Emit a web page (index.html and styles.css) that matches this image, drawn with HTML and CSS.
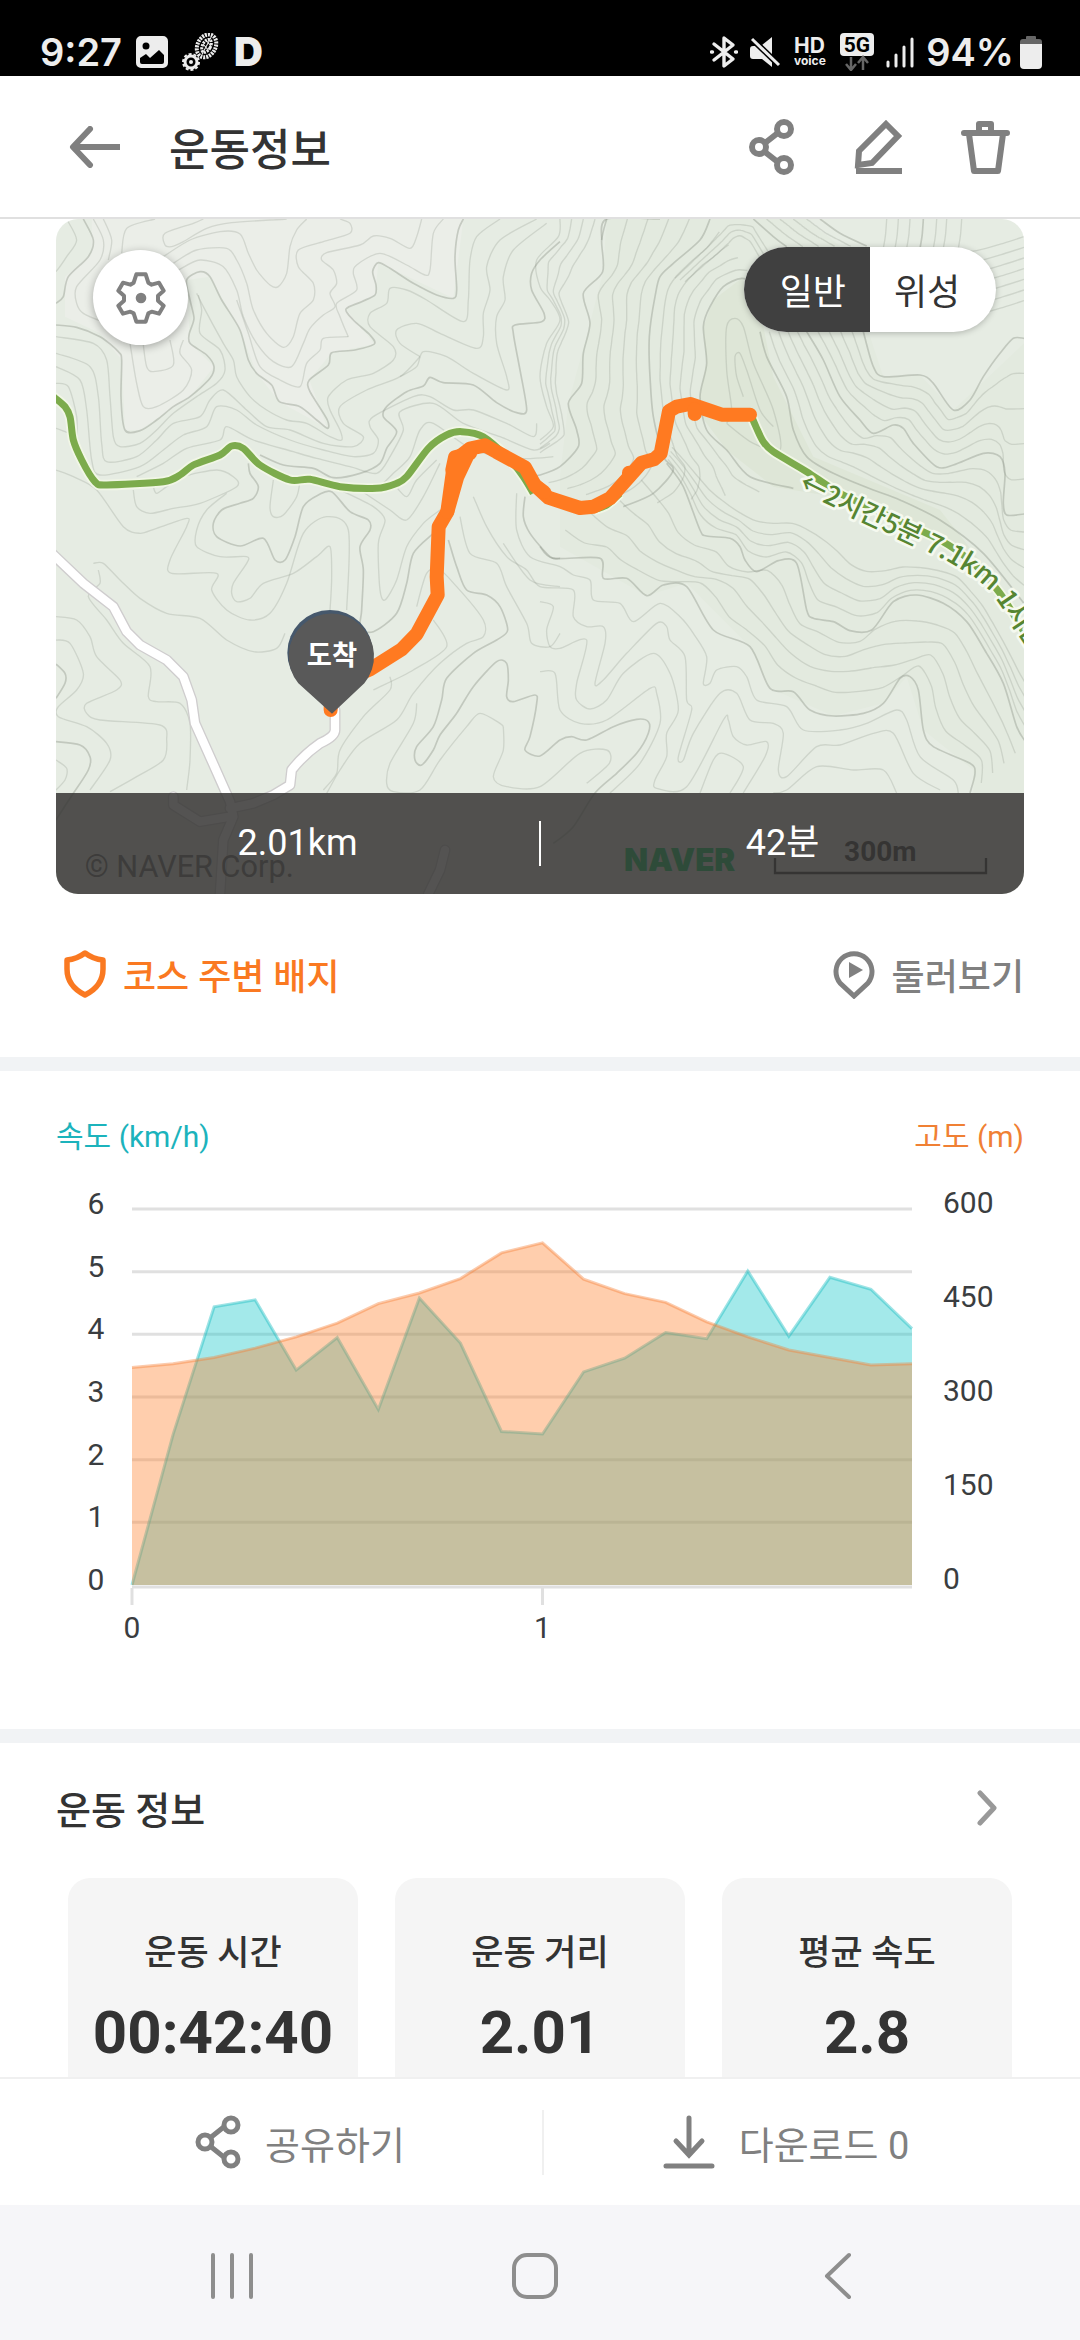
FILE: index.html
```html
<!DOCTYPE html>
<html lang="ko">
<head>
    <meta charset="UTF-8">
    <meta name="viewport" content="width=device-width, initial-scale=1.0">
    <title>운동정보</title>
    <link rel="stylesheet" href="styles.css">
</head>
<body>
    <!-- status bar -->
    <div class="status-bar">
        <div class="status-left">
            <span class="clock">9:27</span>
            <svg class="status-image" width="32" height="32" viewBox="0 0 32 32"><path fill="#ededed" fill-rule="evenodd" d="M5 0h22a5 5 0 0 1 5 5v22a5 5 0 0 1-5 5H5a5 5 0 0 1-5-5V5a5 5 0 0 1 5-5zM10 6.500a3.500 3.500 0 1 0 0 7a3.500 3.500 0 0 0 0-7zM4 22v4q0 2 2 2h20q2 0 2-2v-7l-5-5-9 8-4-4z"/></svg>
            <svg width="38" height="38" viewBox="0 0 38 38">
                <g transform="rotate(28 25 12)" fill="none" stroke="#ededed">
                    <ellipse cx="25" cy="13" rx="9" ry="12" stroke-width="4" stroke-dasharray="2 1"/>
                    <ellipse cx="25" cy="13" rx="4" ry="7" stroke-width="3" stroke-dasharray="2 1"/>
                    <path d="M25 3v20M21 8l8 3M21 13l8 3" stroke-width="1"/>
                </g>
                <circle cx="9" cy="29" r="6" fill="none" stroke="#ededed" stroke-width="3"/>
                <circle cx="9" cy="29" r="8" fill="none" stroke="#ededed" stroke-width="2" stroke-dasharray="3 2"/>
                <circle cx="9" cy="29" r="2" fill="#ededed"/>
            </svg>
            <span class="app-d">D</span>
        </div>
        <div class="status-right">
            <svg width="28" height="34" viewBox="0 0 28 34" fill="none" stroke="#ededed" stroke-width="3.400" stroke-linejoin="round" stroke-linecap="round"><path d="M4 9l19 15-9 7V3l9 7L4 25"/><path d="M1.500 17h1M25.500 17h1"/></svg>
            <svg width="32" height="32" viewBox="0 0 32 32"><path fill="#ededed" d="M22 1v18L12 9zM3 10h5l14 14v7L12 23H3q-3 0-3-3v-7q0-3 3-3z"/><path d="M3 4l26 25" stroke="#000" stroke-width="6"/><path d="M2 3l27 26" stroke="#ededed" stroke-width="3"/></svg>
            <svg width="34" height="42" viewBox="0 -6 34 42" fill="#ededed" font-family="Inter, sans-serif" font-weight="700"><text x="0" y="16" font-size="21">HD</text><text x="0" y="28" font-size="12">voice</text></svg>
            <svg width="34" height="38" viewBox="0 0 34 38"><rect width="34" height="23" rx="4" fill="#ededed"/><text x="17" y="19" font-family="Roboto, sans-serif" font-size="21" font-weight="700" text-anchor="middle">5G</text><path d="M11 24v12M6 31l5 6 5-6M23 37V25M18 30l5-6 5 6" fill="none" stroke="#666" stroke-width="2.500"/></svg>
            <svg width="28" height="32" viewBox="0 0 28 32" stroke="#ededed" stroke-width="3" stroke-linecap="round"><path d="M2 26v4M10 19v11M18 11v19M26 3v27"/></svg>
            <span class="battery-text">94%</span>
            <svg width="22" height="33" viewBox="0 0 22 33"><path fill="#666" d="M6 1q0-1 1-1h8q1 0 1 1v2h3q3 0 3 3v4H0V6q0-3 3-3h3z"/><path fill="#ededed" d="M0 8h22v21q0 4-4 4H4q-4 0-4-4z"/></svg>
        </div>
    </div>

    <header class="app-header">
        <button class="icon-btn" aria-label="뒤로"><svg width="52" height="42" viewBox="0 0 52 42" class="line-icon"><path d="M51 21H5" /><path d="M21 3L4 21l17 18" stroke-linecap="round" stroke-linejoin="round"/></svg></button>
        <h1>운동정보</h1>
        <div class="header-actions">
            <button class="icon-btn" aria-label="공유"><svg width="56" height="56" viewBox="0 0 56 56" class="line-icon"><path d="M21 24l14-11M21 33l14 11"/><circle cx="40" cy="10" r="7"/><circle cx="15" cy="28" r="7"/><circle cx="40" cy="46" r="7"/></svg></button>
            <button class="icon-btn" aria-label="수정"><svg width="56" height="56" viewBox="0 0 56 56" class="line-icon"><path d="M35 5l12 12-26 27-14 2 1-14z"/><path d="M5 52h46"/></svg></button>
            <button class="icon-btn" aria-label="삭제"><svg width="56" height="56" viewBox="0 0 56 56" class="line-icon" stroke-linejoin="round" stroke-linecap="round"><path d="M6 14h43M21 13V5h12v8M11 15l5 37h24l5-37"/></svg></button>
        </div>
    </header>

    <main>
        <section class="course">
            <div class="map">
                <svg class="map-canvas" viewBox="48 27 2904 2025" role="img" aria-label="지도">
                    <rect x="48" y="27" width="2904" height="2025" fill="#e6ece3"/>
                    <path fill="#ebeee8" d="M155 27V130L75 200V320L180 370 245 450 255 660H300L450 560 522 470 450 400 440 210 510 200 600 360 650 490 718 575 862 655 808 510 875 428 1003 402 918 297 1005 255 1015 158 1240 265 1270 27z"/>
                    <path fill="#e3eadf" d="M1700 27L1690 185 1650 340 1585 580 1560 800V1010L1820 1157 1940 1120 2130 1310 2190 1435 2380 1518 2530 1480 2600 1400 2650 1560 2800 1680V1750H2952V400L2740 600 2640 495 2530 500 2400 108 2300 27z"/>
                    <path fill="#dee6d7" d="M2105 205L2020 270 1990 350 2000 460 1970 600 2060 720 2200 830 2500 880 2700 1010 2850 1090 2700 900 2320 740 2200 500 2160 300z"/>
                    <g id="contours" class="contours"></g>
                    <defs>
                        <g id="road-lines">
                            <path d="M30 1025L130 1120 220 1190 260 1265 300 1305 380 1350 430 1400 455 1470 465 1540 510 1640 570 1775 580 1820 550 1890 540 2052"/>
                            <path d="M885 1500V1560Q885 1580 840 1600 790 1635 755 1680L750 1725 700 1755 640 1780 570 1795"/>
                            <path d="M400 1760V1785L480 1835 570 1820M1215 1920L1200 1980 1165 2052"/>
                        </g>
                    </defs>
                    <use href="#road-lines" class="road-edge"/>
                    <use href="#road-lines" class="road"/>
                    <g id="trails"></g>
                    <path id="label-line" fill="none" d="M2272 838L2360 882 2450 925 2610 1000 2730 1058 2800 1100Q2850 1135 2890 1200L2990 1350"/>
                    <text class="trail-label"><textPath href="#label-line">←2시간5분 7.1km 1시간</textPath></text>
                    <g class="route">
                        <path d="M872 1500V1490M940 1400L990 1378 1085 1318 1130 1272 1193 1155 1190 1100 1196 950 1222 905 1238 790 1256 742 1290 716 1335 706 1370 726 1455 772 1485 826 1525 863 1620 894 1660 890 1710 865 1765 803 1805 758 1842 748 1862 730 1887 603 1910 590 1950 582 2045 614H2130"/>
                        <path d="M1222 905L1252 800 1290 720M1237 780L1245 742 1290 730M1485 826L1512 846M1767 788V800M1964 598V612"/>
                    </g>
                    <circle cx="870" cy="1328" r="128" fill="#46586c"/>
                    <path fill="#595959" d="M775 1420A128 128 0 1 1 973 1420L876 1511z"/>
                    <text class="pin-label" x="876" y="1364">도착</text>
                    <text class="copyright" x="134" y="2001">© NAVER Corp.</text>
                    <text class="naver" x="1752" y="1983">NAVER</text>
                    <text class="scale" x="2521" y="1954">300m</text>
                    <path d="M2205 1944v45h633v-45" fill="none" stroke="#333" stroke-width="7"/>
                </svg>
                <button class="settings-btn" aria-label="지도 설정"><svg width="50" height="52" viewBox="227 184 150 156"><path fill="none" stroke="#808080" stroke-width="12" stroke-linejoin="round" d="M288 191H316L324 216 334 222 356 216 370 240 353 255V270L370 285 356 309 334 303 324 308 316 333H288L280 308 270 303 248 309 234 285 251 270V255L234 240 248 216 270 222 280 216z"/><circle cx="302" cy="262" r="16" fill="#808080"/></svg></button>
                <div class="map-type">
                    <button class="active">일반</button>
                    <button>위성</button>
                </div>
                <div class="map-summary">
                    <span>2.01km</span>
                    <span>42분</span>
                </div>
            </div>
            <div class="course-links">
                <a href="#" class="badge-link">
                    <svg width="44" height="50" viewBox="0 0 44 50"><path fill="none" stroke="#fa7921" stroke-width="5.500" stroke-linejoin="round" d="M22 4Q30 10 40 11V20Q40 37 22 46 4 37 4 20V11Q14 10 22 4z"/></svg>
                    코스 주변 배지
                </a>
                <a href="#" class="tour-link">
                    <svg width="44" height="50" viewBox="0 0 44 50"><path fill="none" stroke="#808080" stroke-width="5" d="M8 34A18 18 0 1 1 36 34L22 47z"/><path fill="#808080" d="M17 13l14 8-14 8z"/></svg>
                    둘러보기
                </a>
            </div>
        </section>

        <section class="chart-section">
            <div class="chart-legend">
                <span class="speed">속도 (km/h)</span>
                <span class="altitude">고도 (m)</span>
            </div>
            <svg id="chart" class="chart" viewBox="0 0 968 480" role="img" aria-label="속도와 고도"></svg>
        </section>

        <section class="info">
            <a href="#" class="info-head">
                <h2>운동 정보</h2>
                <svg width="22" height="36" viewBox="0 0 22 36"><path d="M4 3l14 15L4 33" fill="none" stroke="#999" stroke-width="5" stroke-linecap="round" stroke-linejoin="round"/></svg>
            </a>
            <div class="cards">
                <div class="card"><span>운동 시간</span><strong>00:42:40</strong></div>
                <div class="card"><span>운동 거리</span><strong>2.01</strong></div>
                <div class="card"><span>평균 속도</span><strong>2.8</strong></div>
            </div>
        </section>
    </main>

    <footer class="actions">
        <button>
            <svg width="46" height="54" viewBox="0 0 46 54" class="line-icon thin"><path d="M15 23l15-12M15 31l15 12"/><circle cx="36" cy="10" r="7"/><circle cx="10" cy="27" r="7"/><circle cx="36" cy="44" r="7"/></svg>
            공유하기
        </button>
        <button>
            <svg width="52" height="54" viewBox="0 0 52 54" class="line-icon thin" stroke-linecap="round"><path d="M26 3v36M13 26l13 14 13-14M3 51h46"/></svg>
            다운로드 0
        </button>
    </footer>

    <nav class="system-nav">
        <button aria-label="최근 앱"><svg width="42" height="46" viewBox="0 0 42 46"><path d="M2 2v42M21 2v42M40 2v42"/></svg></button>
        <button aria-label="홈"><svg width="46" height="46" viewBox="0 0 46 46"><rect x="2" y="2" width="42" height="42" rx="13"/></svg></button>
        <button aria-label="뒤로 가기"><svg width="28" height="48" viewBox="0 0 28 48"><path d="M25 3L3 24l22 21"/></svg></button>
    </nav>
    <script src="script.js"></script>
</body>
</html>
```
FILE: styles.css
```css
* {
    box-sizing: border-box;
}
body {
    margin: 0;
    height: 100vh;
    display: flex;
    flex-direction: column;
    background: #fff;
    color: #333;
    font-family: Roboto, "Noto Sans CJK KR", sans-serif;
}
button {
    border: none;
    background: none;
    padding: 0;
    font: inherit;
    color: inherit;
    cursor: pointer;
}
a {
    color: inherit;
    text-decoration: none;
}
svg {
    display: block;
}
h1, h2 {
    margin: 0;
    font-weight: 500;
}

/* status bar */
.status-bar {
    flex: none;
    height: 76px;
    padding: 28px 38px 0 40px;
    display: flex;
    align-items: center;
    justify-content: space-between;
    background: #000;
    color: #ededed;
    font-family: Inter, sans-serif;
    font-size: 38px;
    font-weight: 600;
    line-height: 48px;
}
.status-left, .status-right {
    display: flex;
    align-items: center;
    gap: 14px;
}
.status-right {
    gap: 12px;
}
.app-d {
    font-size: 40px;
    font-weight: 900;
}
.battery-text {
    margin-right: -6px;
}

/* header */
.app-header {
    flex: none;
    height: 143px;
    padding: 0 66px 0 69px;
    display: flex;
    align-items: center;
    border-bottom: 2px solid #e0e0e0;
}
.app-header h1 {
    margin-left: 48px;
    font-family: "Noto Sans CJK KR", sans-serif;
    font-size: 44px;
    line-height: 64px;
}
.header-actions {
    margin-left: auto;
    display: flex;
    gap: 51px;
}
.line-icon {
    fill: none;
    stroke: #808080;
    stroke-width: 6px;
}
.line-icon.thin {
    stroke-width: 5px;
}

main {
    flex: 1;
    min-height: 0;
    overflow: hidden;
}

/* map */
.course {
    padding: 0 56px;
    border-bottom: 14px solid #f1f3f5;
}
.map {
    position: relative;
    overflow: hidden;
    border-radius: 22px;
}
.map-canvas {
    width: 100%;
}
.contours path {
    fill: none;
    stroke: #8d9388;
    stroke-opacity: 0.26;
    stroke-width: 4px;
}
.contours .major {
    stroke-opacity: 0.4;
    stroke-width: 5px;
}
.road, .road-edge {
    fill: none;
    stroke: #fff;
    stroke-width: 25px;
    stroke-linecap: round;
    stroke-linejoin: round;
}
.road-edge {
    stroke: #cfcdce;
    stroke-width: 33px;
}
.trail, .trail-edge {
    fill: none;
    stroke: #7cab4c;
    stroke-width: 21px;
}
.trail-edge {
    stroke: #f1f6e6;
    stroke-width: 32px;
}
.trail-label {
    fill: #568532;
    stroke: #f5f9ef;
    stroke-width: 16px;
    stroke-linejoin: round;
    paint-order: stroke;
    font-family: "Noto Sans CJK KR", sans-serif;
    font-size: 81px;
    font-weight: 500;
}
.route {
    fill: none;
    stroke: #ff7a21;
    stroke-width: 42px;
    stroke-linecap: round;
    stroke-linejoin: round;
}
.pin-label {
    fill: #fff;
    font-size: 82px;
    font-weight: 700;
    text-anchor: middle;
}
.copyright {
    fill: #666;
    font-family: Roboto, sans-serif;
    font-size: 92px;
}
.naver {
    fill: #03c75a;
    font-family: Inter, sans-serif;
    font-size: 94px;
    font-weight: 900;
}
.scale {
    fill: #333;
    font-family: Roboto, sans-serif;
    font-size: 84px;
    font-weight: 700;
    text-anchor: middle;
}
.settings-btn {
    position: absolute;
    top: 31px;
    left: 37px;
    width: 95px;
    height: 95px;
    display: grid;
    place-items: center;
    border-radius: 50%;
    background: #fff;
    box-shadow: 0 2px 8px rgba(0, 0, 0, 0.3);
}
.map-type {
    position: absolute;
    top: 28px;
    right: 28px;
    display: flex;
    border-radius: 43px;
    overflow: hidden;
    background: #fff;
    box-shadow: 0 1px 6px rgba(0, 0, 0, 0.25);
    font-family: "Noto Sans CJK KR", sans-serif;
    font-size: 36px;
    line-height: 85px;
}
.map-type button {
    width: 126px;
    padding: 0 22px 0 24px;
    text-align: left;
}
.map-type .active {
    padding: 0 24px 0 22px;
    text-align: right;
    background: #404040;
    color: #fff;
}
.map-summary {
    position: absolute;
    left: 0;
    right: 0;
    bottom: 0;
    height: 101px;
    display: flex;
    align-items: center;
    background: rgba(54, 53, 52, 0.85);
    color: #fff;
    font-size: 36px;
    line-height: 45px;
}
.map-summary span {
    flex: 1;
    text-align: center;
}
.map-summary span + span {
    border-left: 2px solid #fff;
}
.course-links {
    height: 163px;
    padding-bottom: 4px;
    display: flex;
    align-items: center;
    justify-content: space-between;
    font-size: 36px;
    font-weight: 500;
}
.course-links a {
    display: flex;
    align-items: center;
    gap: 16px;
}
.badge-link {
    padding-left: 7px;
    color: #fa7921;
}
.tour-link {
    color: #808080;
}

/* chart */
.chart-section {
    padding: 44px 56px 74px;
    border-bottom: 14px solid #f1f3f5;
}
.chart-legend {
    display: flex;
    justify-content: space-between;
    font-size: 30px;
    line-height: 44px;
}
.speed {
    color: #1cb3bc;
}
.altitude {
    color: #f08034;
}
.chart {
    width: 100%;
    margin-top: 16px;
}
.chart text {
    fill: #3a3d40;
    font-family: Roboto, sans-serif;
    font-size: 30px;
}
.grid-line {
    stroke: #e0e0e0;
    stroke-width: 3px;
}
.area-speed {
    fill: rgba(13, 197, 200, 0.38);
}
.area-altitude {
    fill: rgba(255, 125, 40, 0.38);
}
.line-speed, .line-altitude {
    fill: none;
    stroke: rgba(13, 185, 190, 0.4);
    stroke-width: 3px;
}
.line-altitude {
    stroke: rgba(245, 125, 50, 0.4);
}

/* workout info */
.info-head {
    display: flex;
    align-items: center;
    justify-content: space-between;
    height: 135px;
    padding: 0 82px 6px 56px;
}
.info-head h2 {
    font-size: 38px;
}
.cards {
    display: grid;
    grid-template-columns: repeat(3, 1fr);
    gap: 37px;
    padding: 0 68px;
}
.card {
    height: 260px;
    padding-top: 50px;
    border-radius: 22px;
    background: #f5f5f5;
    text-align: center;
}
.card span {
    display: block;
    font-size: 35px;
    font-weight: 500;
    line-height: 52px;
}
.card strong {
    display: block;
    margin-top: 18px;
    font-size: 60px;
    line-height: 70px;
}

/* bottom actions */
.actions {
    flex: none;
    height: 128px;
    padding: 0 52px 0 58px;
    display: flex;
    align-items: center;
    border-top: 2px solid #f0f0f0;
    color: #808080;
    font-size: 38px;
}
.actions button {
    flex: 1;
    height: 65px;
    display: flex;
    align-items: center;
    justify-content: center;
    gap: 24px;
}
.actions button + button {
    border-left: 2px solid #f0f0f0;
}

.system-nav {
    flex: none;
    height: 135px;
    padding: 6px 91px 0 81px;
    display: grid;
    grid-template-columns: repeat(3, 1fr);
    background: #f6f6f9;
}
.system-nav button {
    display: grid;
    place-items: center;
}
.system-nav svg {
    fill: none;
    stroke: #8e8e8e;
    stroke-width: 4px;
    stroke-linecap: round;
    stroke-linejoin: round;
}
```
FILE: script.js
```js
const SVG = "http://www.w3.org/2000/svg";

function add(parent, tag, attrs, text) {
    const el = document.createElementNS(SVG, tag);
    for (const key in attrs) el.setAttribute(key, attrs[key]);
    if (text !== undefined) el.textContent = text;
    parent.appendChild(el);
    return el;
}

function parse(str, dx = 0, dy = 0) {
    return str.trim().split(/\s+/).map((p) => {
        const [x, y] = p.split(",").map(Number);
        return [x + dx, y + dy];
    });
}

// smooth curve through all points
function smooth(pts) {
    let d = "M" + pts[0];
    for (let i = 0; i < pts.length - 1; i++) {
        const a = pts[i - 1] || pts[i];
        const b = pts[i];
        const c = pts[i + 1];
        const e = pts[i + 2] || c;
        const k = 7;
        d += "C" + [b[0] + (c[0] - a[0]) / k, b[1] + (c[1] - a[1]) / k,
            c[0] - (e[0] - b[0]) / k, c[1] - (e[1] - b[1]) / k, c[0], c[1]].map(Math.round);
    }
    return d;
}

// n points evenly spaced on the line
function resample(pts, n) {
    const len = [0];
    for (let i = 1; i < pts.length; i++) {
        len.push(len[i - 1] + Math.hypot(pts[i][0] - pts[i - 1][0], pts[i][1] - pts[i - 1][1]));
    }
    const out = [];
    let j = 1;
    for (let i = 0; i < n; i++) {
        const t = len[len.length - 1] * i / (n - 1);
        while (j < pts.length - 1 && len[j] < t) j++;
        const f = (t - len[j - 1]) / (len[j] - len[j - 1]);
        out.push([0, 1].map((k) => pts[j - 1][k] + (pts[j][k] - pts[j - 1][k]) * f));
    }
    return out;
}

const contours = document.getElementById("contours");

function draw(pts, major) {
    add(contours, "path", { d: smooth(pts), class: major ? "major" : "minor" });
}

// minor lines between two neighbours
function between(a, b, count) {
    const p = resample(a, 26);
    const q = resample(b, 26);
    for (let i = 1; i <= count; i++) {
        const f = i / (count + 1);
        draw(p.map((v, n) => [v[0] + (q[n][0] - v[0]) * f, v[1] + (q[n][1] - v[1]) * f]));
    }
}

const majorLines = [
    "130,27 160,90 145,140 85,200 70,260 48,280",
    "48,345 110,352 180,380 235,425 245,450 243,560 255,660 300,662 350,630 400,590 450,560 510,505 522,470 500,435 450,400 448,370 462,325 450,270 440,210 480,185 510,200 545,270 600,360 625,450 650,490 695,525 718,575 780,590 830,630 862,655 862,630 810,545 808,510 865,465 875,428 945,420 1003,402 990,375 940,330 918,297 965,275 1005,255 1008,225 998,185 1015,158 1050,175 1120,220 1190,255 1240,265 1250,240 1245,140 1255,60 1270,27",
    "1560,95 1500,150 1475,190 1475,240 1512,310 1505,335 1425,345 1420,370 1440,480 1460,600 1430,608 1370,578 1300,525 1210,518 1170,502 1150,528 1100,545 1040,590 1030,620 1070,665 1040,715 1020,760 960,790 880,803 820,775 730,765 660,735",
    "625,760 630,790 655,830 640,865 600,880 545,900 520,940 530,980 600,1008 670,985 705,1050 735,1050 765,980 790,890 835,855 875,845 930,905 985,930 990,960 960,1010 970,1080 965,1200 960,1255 1000,1265 1070,1210 1100,1120 1120,1030 1180,970",
    "1225,990 1250,1070 1280,1140 1340,1155 1380,1190 1403,1260 1370,1290 1300,1330 1220,1405 1205,1470 1180,1550 1130,1610 1125,1650 1145,1665 1180,1620 1200,1575 1250,1510 1300,1430 1370,1355 1400,1360 1405,1410 1400,1460 1420,1475 1485,1455 1490,1480 1470,1580 1455,1620 1500,1638 1560,1590 1595,1580 1640,1590 1720,1550 1790,1528 1825,1535 1825,1570 1790,1630 1730,1690 1665,1749 1600,1850 1540,1900",
    "1455,860 1450,920 1470,970 1530,1040 1560,1045",
    "48,1362 75,1390 75,1420 48,1465",
    "48,1595 120,1605 150,1640 145,1680 100,1750 48,1830",
    "1860,27 1700,27 1685,90"
];
majorLines.forEach((l) => draw(parse(l), true));

const minorLines = [
    "80,27 110,90 80,140 48,185",
    "160,27 190,90 180,150 110,230 110,280 130,310 200,340",
    "190,27 215,90 205,150",
    "345,27 260,55 245,130",
    "490,27 460,40 375,70 375,105 395,110 430,95 500,55 575,38 740,27",
    "370,140 450,90 540,65 600,72 625,130 650,180 690,225 715,230 740,190 750,110 770,60 800,27",
    "400,160 470,120 560,115 590,150 620,220 640,300 680,370 730,412 760,380 780,310 820,270 820,220 775,170 775,120 850,95 930,70 930,40 900,27",
    "415,180 480,150 550,170 590,240 610,320 650,400 700,455 755,470 790,400 810,355 850,315 885,290 870,250 890,220 880,180 845,150 860,128 960,105 1000,78 1050,85 1110,115 1130,80 1145,27",
    "925,380 850,385 840,420 800,460 780,530 720,510 660,470 625,370 590,270",
    "1210,27 1180,70 1170,180 1155,195 1100,165 1020,130 950,165 940,190 950,240 890,280 900,320 925,380",
    "470,250 490,290 550,400 580,450 590,500 630,560 680,600 740,630 800,640 870,680 905,690 900,660 870,600 865,560 920,510 1000,490 1060,450 1060,410 990,350 990,310 1040,280 1050,235 1100,240 1160,270 1270,335 1285,270 1290,150 1310,80 1380,27",
    "475,255 485,300 480,370 540,420 555,480 530,520 470,560 400,610 350,660 300,700 240,710 220,680 210,560 200,450 160,400 48,380",
    "270,400 290,520 310,590 350,590 430,540 455,480 420,430 430,390",
    "310,405 320,470 340,485 400,465 390,390",
    "1140,440 1080,400 1070,360 1130,340 1200,370 1310,415 1330,380 1330,310 1350,240 1340,170 1380,90 1490,27",
    "1080,500 1130,470 1150,425 1220,440 1300,490 1400,540 1400,500 1370,400 1370,320 1395,270 1390,200 1420,120 1520,40",
    "1140,440 1080,500 980,540 900,590 910,640 970,680 940,710 850,700 750,660 680,650 620,600 550,540 510,570 480,620 400,640 350,690 290,740 200,755 185,700 175,560 150,470 48,430",
    "1490,640 1480,680 1400,640 1300,600 1240,600 1170,560 1120,560 1000,620 990,650 1015,690 1000,730 940,740 850,720 750,690 650,645 590,600 530,590 500,650 430,675 370,720 300,770 180,795 155,750 140,600 120,510 48,470",
    "48,520 85,530 110,620 115,700 160,800",
    "1530,700 1480,720 1380,680 1270,640 1180,580 1080,605 1090,660 1050,740 1010,790 930,770 830,745 760,725 640,690 560,650 540,690 440,715 370,760 290,800",
    "1540,740 1440,745 1300,720 1180,640 1140,660 1110,740 1060,790 1030,820",
    "48,655 90,670",
    "48,780 100,800 170,840 250,950 300,970 350,955 440,925 440,950 390,1050 395,1090 530,1090 515,1140 560,1200 630,1230 690,1210 740,1120 790,970 860,920 925,960 920,1200",
    "280,840 290,890 330,910 400,895 480,880 590,830 580,800 530,780 430,800 380,830 350,850 340,830",
    "700,810 690,890 700,920 730,915 770,860 780,810",
    "870,1200 875,1100 870,1010 830,1040 760,1090 670,1120 630,1165 590,1175 575,1150 580,1120 620,1060 620,1040 540,1040 470,1010 470,960 500,900 560,850",
    "900,840 1000,890 1035,930 1015,1000 1020,1140 1035,1170 1070,1110 1100,1010 1150,940 1200,900",
    "960,840 1050,900 1100,930 1150,860 1200,760",
    "1060,820 1100,860 1130,810 1190,750",
    "1260,920 1290,1030 1370,1060 1400,1130 1460,1240 1475,1300 1530,1310 1560,1270",
    "1300,860 1340,950 1400,1040 1460,1080 1500,1130 1600,1140 1600,1220 1640,1250 1690,1250 1695,1300 1665,1420 1690,1410 1760,1330 1850,1240 1880,1250 1890,1290 1935,1340 1940,1470 1955,1500 1915,1640 1930,1650 1960,1570 2040,1450 2090,1450 2130,1530 2200,1540 2230,1570 2215,1680 2240,1700 2330,1610 2400,1605 2500,1570 2560,1570 2620,1690 2700,1740",
    "1430,850 1430,960 1470,1040 1560,1070 1600,1095 1650,1110 1660,1170 1740,1180 1780,1235 1860,1180 1920,1220 1960,1270 2000,1340 1990,1420 2010,1420 2030,1380 2090,1370 2120,1400 2150,1470 2240,1490 2290,1560 2400,1560 2480,1540 2570,1500 2600,1530 2640,1640 2740,1710 2755,1750",
    "160,1060 190,1060 240,1110 300,1165 380,1210 480,1225 560,1290 640,1325 710,1315 735,1270",
    "175,1080 180,1120 145,1160 200,1230 250,1300 330,1370 325,1460 350,1475 420,1480 450,1540 450,1650 440,1740",
    "48,1220 110,1230 150,1280 170,1340 240,1410 230,1440 140,1480 140,1510 180,1530 360,1545 380,1590 370,1650 290,1700 210,1745",
    "48,1290 90,1300 130,1390 110,1440 55,1490 55,1520 140,1550 200,1600 210,1650 150,1740",
    "48,1650 80,1675 75,1710 48,1740",
    "1130,1190 1160,1090 1200,1080 1250,1130 1330,1230 1330,1280 1280,1300 1200,1360 1120,1450 1070,1530 960,1600 900,1680 860,1750",
    "1180,1230 1220,1310 1120,1380 1000,1440",
    "1050,1400 1050,1440 970,1520 900,1620 890,1690 850,1740",
    "1390,1550 1380,1540 1320,1510 1280,1550 1200,1650 1140,1740 1060,1745 1040,1720 1050,1660 1120,1540 1130,1480",
    "1390,1550 1390,1620 1360,1700 1400,1730 1500,1730 1620,1630 1700,1620 1708,1660 1640,1720",
    "1390,1000 1470,1110 1560,1130",
    "1500,1385 1545,1390 1560,1500 1620,1540 1700,1530 1830,1435 1850,1450 1860,1540 1800,1660 1710,1749",
    "1500,1175 1540,1190 1520,1260 1530,1310 1560,1315 1640,1290 1610,1420 1610,1470 1650,1497 1700,1470 1750,1390 1840,1330 1890,1390 1915,1500 1880,1570 1880,1640 1845,1710 1850,1735 1940,1730 2050,1530 2065,1530 2080,1580 2120,1605 2180,1595 2175,1640 2110,1749",
    "1980,1749 2020,1650 2050,1630 2110,1670 2070,1749",
    "2200,1749 2240,1740 2330,1670 2440,1680 2530,1680 2570,1749"
];
minorLines.forEach((l) => draw(parse(l)));

// east slope
const east = [
    "200,27 185,90 188,185 130,250 150,340 130,430 125,520 85,580 110,660 115,710 60,770 0,795 -30,800",
    "510,27 480,90 400,160 360,200 345,260 328,380 330,500 340,620 370,740 400,780 340,850 250,890",
    "650,220 605,205 550,230 510,290 490,350 500,460 480,560 500,660 560,720 630,800 760,835",
    "660,365 680,440 740,560 760,660 800,740 880,790 1000,840 1080,870 1200,930 1330,1030 1452,1180",
    "800,365 850,450 900,560 960,630 1000,670 1060,645 1090,655 1120,700 1190,770 1240,765 1330,730 1380,740 1395,790 1390,880 1400,915 1452,912",
    "970,365 1000,470 1030,500 1140,495 1180,520 1240,600 1290,570 1330,500 1380,430 1420,385 1452,385"
].map((l) => parse(l, 1500));
east.forEach((l) => draw(l, true));
between(east[0], east[1], 4);
between(east[1], east[2], 4);
between(east[3], east[4], 4);
between(east[4], east[5], 4);

// south slope
const south = [
    "0,1010 40,1045 180,1045 190,1105 260,1105 320,1157 370,1125 440,1130 520,1260 630,1310 690,1435 760,1445 810,1500 880,1518 970,1510 1030,1480 1080,1405 1110,1400 1135,1440 1150,1560 1180,1610 1290,1660 1305,1690 1290,1749",
    "380,760 430,830 480,960 500,978 570,985 600,1010 615,1050 650,1085 715,1052 770,1060 800,1200 820,1225 880,1235 930,1262 995,1260 1060,1175 1130,1155 1210,1180 1280,1235 1340,1330 1390,1420 1430,1550 1460,1600",
    "400,700 500,800 620,900 760,910 900,960 960,1040 1100,1040 1250,1070 1330,1160 1400,1280 1470,1400"
].map((l) => parse(l, 1500));
draw(south[0], true);
draw(south[1], true);
between(south[0], south[1], 4);
between(south[1], south[2], 4);
draw(parse("560,640 575,600 560,480 560,350 585,325 610,350 640,460 700,600 720,720 640,700 560,640", 1500));
draw(parse("610,560 590,500 585,440 600,430 620,480 660,600 700,650", 1500));

// slope under the map type buttons
const north = [
    "640,27 700,80 740,110",
    "840,27 900,70 980,108"
].map((l) => parse(l, 1500));
const ridge = [
    "450,220 560,130 600,90 630,120 690,230",
    "390,200 500,90 560,27 640,27 740,180"
].map((l) => parse(l, 1500));
north.forEach((l) => draw(l, true));
between(north[0], north[1], 4);
between(ridge[0], ridge[1], 3);
[1040, 1075, 1110, 1150, 1190, 1220, 1265].forEach((x, i) => {
    draw([[1500 + x, 27], [1497 + x, 70], [1490 + x, 115]], i === 3);
});
for (let i = 0; i < 7; i++) {
    const y = 80 + i * 32;
    draw([[2740, y + 45], [2810, y + 42], [2890, y + 20], [2952, y]]);
}
const west = [
    "60,27 55,80 -10,150 0,230 30,270 60,330 20,400 0,500 20,590 40,650 0,690",
    "200,27 170,110 120,200 70,260 100,340 60,440 60,540 80,620 90,690 0,740"
].map((l) => parse(l, 1500));
draw(west[0]);
between(west[0], west[1], 3);

// hiking trail, light edge first
const trails = document.getElementById("trails");
const trailLines = [
    parse("40,560 75,590 90,620 100,690 125,750 165,815 200,825 370,815 420,795 460,765 540,735 575,708 610,715 660,765 750,810 810,808 900,830 1010,835 1070,820 1100,800 1165,715 1220,675 1265,665 1330,680 1400,740 1450,800 1480,850"),
    parse("160,900 200,885 240,850", 1500),
    parse("635,620 650,655 670,695 700,725 800,785 900,850 1050,920 1200,990 1300,1060 1380,1150 1460,1280", 1500)
];
["trail-edge", "trail"].forEach((name) => {
    trailLines.forEach((pts) => add(trails, "path", { d: smooth(pts), class: name }));
});

// speed / altitude chart
const speed = [0, 2.4, 4.44, 4.55, 3.43, 3.95, 2.8, 4.58, 3.86, 2.45, 2.41, 3.4, 3.62, 4.03, 3.93, 5.01, 3.97, 4.91, 4.72, 4.09];
const altitude = [347, 353, 363, 378, 396, 418, 449, 466, 489, 530, 546, 488, 465, 451, 420, 396, 375, 363, 351, 353];
const chart = document.getElementById("chart");
const left = 76, right = 856, top0 = 34, bottom = 410;
const px = (i) => left + (right - left) * i / (speed.length - 1);
const py = (v, max) => bottom - (bottom - top0) * v / max;

for (let i = 1; i <= 6; i++) {
    add(chart, "line", { x1: left, x2: right, y1: py(i, 6), y2: py(i, 6), class: "grid-line" });
}
for (let i = 0; i <= 6; i++) {
    add(chart, "text", { x: 40, y: py(i, 6) + 5, "text-anchor": "middle" }, i);
}
for (let i = 0; i <= 600; i += 150) {
    add(chart, "text", { x: 887, y: py(i, 600) + 4 }, i);
}
[["speed", speed, 6], ["altitude", altitude, 600]].forEach(([name, data, max]) => {
    const pts = data.map((v, i) => [px(i), py(v, max)]).join(" ");
    add(chart, "polygon", { points: `${left},${bottom} ${pts} ${right},${bottom}`, class: "area-" + name });
    add(chart, "polyline", { points: pts, class: "line-" + name });
});
add(chart, "line", { x1: left, x2: right, y1: bottom + 2, y2: bottom + 2, class: "grid-line" });
[0, 10].forEach((i) => {
    add(chart, "line", { x1: px(i), x2: px(i), y1: bottom + 3, y2: bottom + 20, class: "grid-line" });
    add(chart, "text", { x: px(i), y: bottom + 53, "text-anchor": "middle" }, i / 10);
});
```
